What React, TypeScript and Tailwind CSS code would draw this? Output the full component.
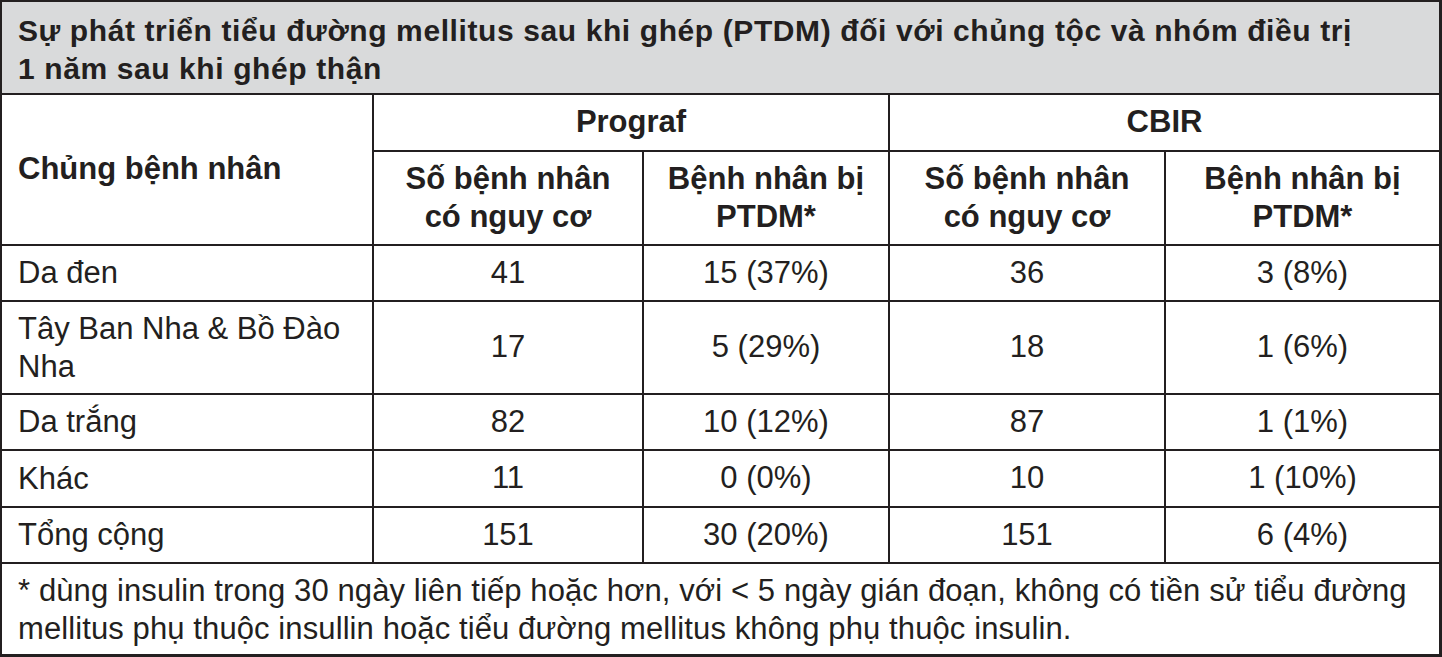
const FONT = "font-['Liberation_Sans',Arial,sans-serif]";

const rows = [
  { name: "Da đen", a: "41", b: "15 (37%)", c: "36", d: "3 (8%)" },
  { name: "Tây Ban Nha & Bồ Đào Nha", a: "17", b: "5 (29%)", c: "18", d: "1 (6%)" },
  { name: "Da trắng", a: "82", b: "10 (12%)", c: "87", d: "1 (1%)" },
  { name: "Khác", a: "11", b: "0 (0%)", c: "10", d: "1 (10%)" },
  { name: "Tổng cộng", a: "151", b: "30 (20%)", c: "151", d: "6 (4%)" },
];

function Cell({ children, className = "" }: { children: React.ReactNode; className?: string }) {
  return <div className={`bg-white flex items-center justify-center text-center ${className}`}>{children}</div>;
}

export default function App() {
  return (
    <div className={`w-[1442px] h-[657px] bg-white ${FONT} text-[#231f20]`}>
      <div className="grid grid-cols-[370px_268px_244px_274px_273px] grid-rows-[91px_55px_92px_54px_91px_54px_55px_54px_90px] gap-[2px] bg-[#231f20] pt-[2px] pl-[2px] pr-[3px] pb-[3px] w-[1442px] h-[657px]">
        {/* title */}
        <div className="col-span-5 bg-[#d9dadb] pl-4 pt-[10px] text-[30px] font-bold leading-[38px] tracking-[0.6px]">
          Sự phát triển tiểu đường mellitus sau khi ghép (PTDM) đối với chủng tộc và nhóm điều trị
          <br />1 năm sau khi ghép thận
        </div>

        {/* header */}
        <div className="row-span-2 bg-white flex items-center pl-4 text-[31px] font-bold">Chủng bệnh nhân</div>
        <Cell className="col-span-2 text-[31px] font-bold">Prograf</Cell>
        <Cell className="col-span-2 text-[31px] font-bold">CBIR</Cell>
        <Cell className="text-[31px] font-bold leading-[38px]">
          Số bệnh nhân<br />có nguy cơ
        </Cell>
        <Cell className="text-[31px] font-bold leading-[38px]">
          Bệnh nhân bị<br />PTDM*
        </Cell>
        <Cell className="text-[31px] font-bold leading-[38px]">
          Số bệnh nhân<br />có nguy cơ
        </Cell>
        <Cell className="text-[31px] font-bold leading-[38px]">
          Bệnh nhân bị<br />PTDM*
        </Cell>

        {rows.map((r) => (
          <>
            <div key={r.name} className="bg-white flex items-center pl-4 pr-4 text-[31px] leading-[38px]">
              {r.name}
            </div>
            <Cell className="text-[31px]">{r.a}</Cell>
            <Cell className="text-[31px]">{r.b}</Cell>
            <Cell className="text-[31px]">{r.c}</Cell>
            <Cell className="text-[31px]">{r.d}</Cell>
          </>
        ))}

        {/* footnote */}
        <div className="col-span-5 bg-white pl-4 pt-[8px] text-[31px] leading-[38px] tracking-[0.1px]">
          * dùng insulin trong 30 ngày liên tiếp hoặc hơn, với &lt; 5 ngày gián đoạn, không có tiền sử tiểu đường
          <br />mellitus phụ thuộc insullin hoặc tiểu đường mellitus không phụ thuộc insulin.
        </div>
      </div>
    </div>
  );
}
